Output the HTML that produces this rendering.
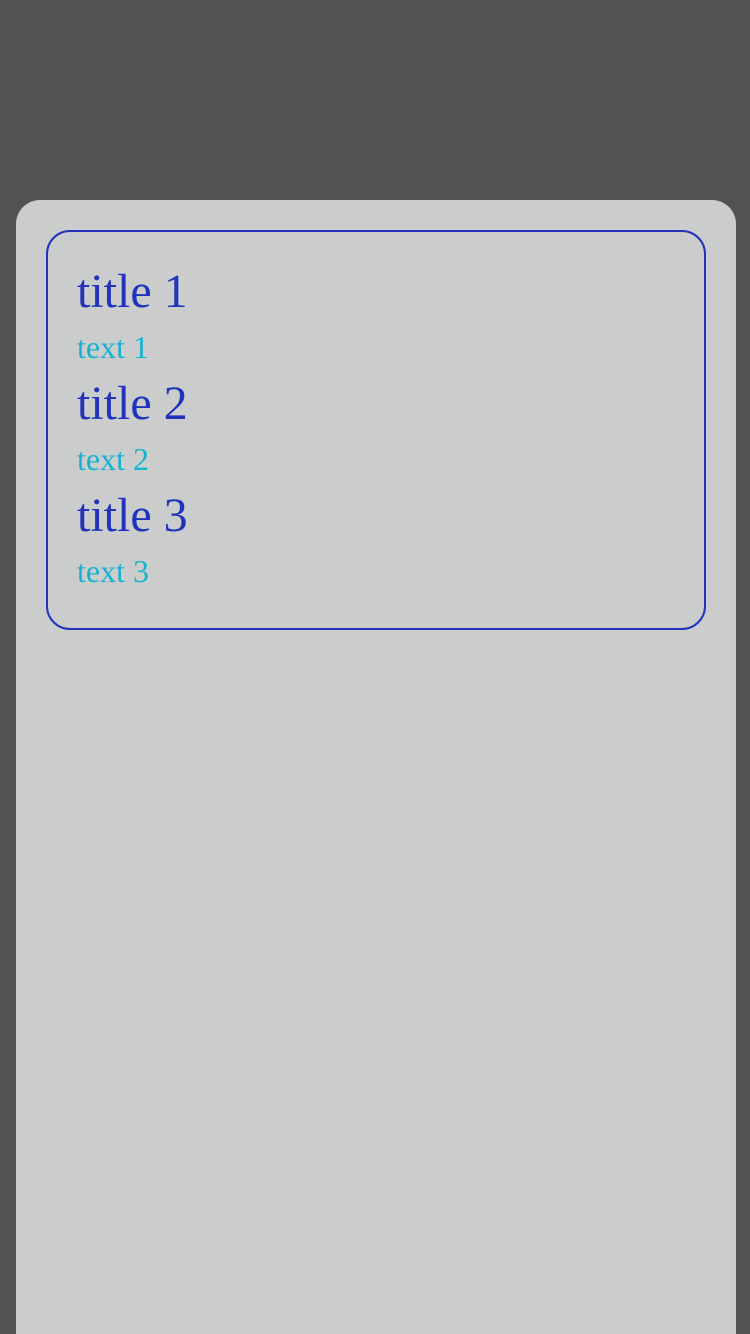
<!DOCTYPE html>
<html><head><meta charset="utf-8"><style>
html,body{margin:0;padding:0;width:750px;height:1334px;background:#515352;overflow:hidden}
.card{position:absolute;left:16px;top:200px;width:720px;height:1134px;background:#cbcdcc;border-radius:24px 24px 0 0}
.box{position:absolute;left:30px;top:30px;width:656px;height:396px;border:2px solid #1f33bb;border-radius:24px}
.list{position:absolute;left:29px;top:28px;font-family:"Liberation Serif",serif}
.t{font-size:48px;line-height:64px;color:#1f33bb;margin:0}
.x{font-size:32px;line-height:48px;color:#14b4d0;margin:0;position:relative;top:-1px}
</style></head><body>
<div class="card"><div class="box"><div class="list">
<p class="t">title 1</p><p class="x">text 1</p>
<p class="t">title 2</p><p class="x">text 2</p>
<p class="t">title 3</p><p class="x">text 3</p>
</div></div></div>
</body></html>
